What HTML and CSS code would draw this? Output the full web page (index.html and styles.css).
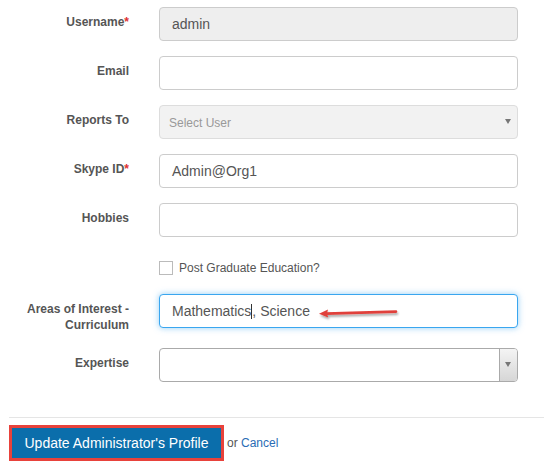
FILE: index.html
```
<!DOCTYPE html>
<html>
<head>
<meta charset="utf-8">
<link rel="stylesheet" href="styles.css">
</head>
<body>
<form class="form">
  <div class="row">
    <label class="lbl">Username<span class="req">*</span></label>
    <div class="field"><div class="input disabled">admin</div></div>
  </div>
  <div class="row">
    <label class="lbl">Email</label>
    <div class="field"><div class="input"></div></div>
  </div>
  <div class="row">
    <label class="lbl">Reports To</label>
    <div class="field"><div class="input select-dis"><span class="placeholder">Select User</span><span class="caret"></span></div></div>
  </div>
  <div class="row">
    <label class="lbl">Skype ID<span class="req">*</span></label>
    <div class="field"><div class="input">Admin@Org1</div></div>
  </div>
  <div class="row">
    <label class="lbl">Hobbies</label>
    <div class="field"><div class="input"></div></div>
  </div>
  <div class="row check-row">
    <div></div>
    <label class="check"><span class="box"></span>Post Graduate Education?</label>
  </div>
  <div class="row">
    <label class="lbl">Areas of Interest -<br>Curriculum</label>
    <div class="field"><div class="input focus">Mathematics<span class="cursor"></span>, Science</div></div>
  </div>
  <div class="row">
    <label class="lbl">Expertise</label>
    <div class="field"><div class="input combo"><span class="combo-btn"><span class="caret"></span></span></div></div>
  </div>
  <div class="footer">
    <button type="button" class="btn">Update Administrator's Profile</button>
    <span class="or">or <a class="cancel">Cancel</a></span>
  </div>
  <svg class="arrow" width="90" height="16" viewBox="0 0 90 16">
    <defs>
      <filter id="sh" x="-10%" y="-50%" width="120%" height="200%">
        <feGaussianBlur in="SourceAlpha" stdDeviation="1.2"/>
        <feOffset dx="1" dy="2"/>
        <feComponentTransfer><feFuncA type="linear" slope="0.35"/></feComponentTransfer>
        <feMerge><feMergeNode/><feMergeNode in="SourceGraphic"/></feMerge>
      </filter>
    </defs>
    <g filter="url(#sh)">
      <path d="M10 8.6 L80 6.6" stroke="#e0403a" stroke-width="2.6" stroke-linecap="round" fill="none"/>
      <path d="M3 8.8 L12 4.6 L11 8.6 L12.2 12.6 Z" fill="#e0403a"/>
    </g>
  </svg>
</form>
</body>
</html>
```
FILE: styles.css
```
* { box-sizing: border-box; }
body {
  margin: 0;
  font-family: "Liberation Sans", Arial, sans-serif;
  background: #fff;
  color: #555;
  width: 544px;
  height: 468px;
  overflow: hidden;
}
.form {
  position: relative;
  padding-top: 7px;
}
.row {
  display: grid;
  grid-template-columns: 129px 359px;
  column-gap: 30px;
  margin-bottom: 15px;
}
.lbl {
  text-align: right;
  font-size: 12px;
  font-weight: bold;
  line-height: 16px;
  padding-top: 7px;
  color: #555;
}
.req { color: #e0302f; }
.input {
  height: 34px;
  border: 1px solid #ccc;
  border-radius: 4px;
  padding: 0 12px;
  font-size: 14px;
  line-height: 32px;
  color: #555;
  background: #fff;
  position: relative;
}
.disabled { background: #eee; }
.select-dis {
  background: #f2f2f2;
  border-color: #ddd;
}
.placeholder { font-size: 12px; color: #999; margin-left: -3px; }
.caret {
  position: absolute;
  width: 0; height: 0;
  border-left: 3.5px solid transparent;
  border-right: 3.5px solid transparent;
  border-top: 5px solid #777;
}
.select-dis .caret { right: 6px; top: 13px; }
.check-row { margin-bottom: 18px; padding-top: 8px; }
.check {
  display: flex;
  align-items: center;
  font-size: 12px;
  color: #555;
  line-height: 16px;
}
.box {
  width: 14px; height: 14px;
  border: 1px solid #bbb;
  background: #fff;
  margin-right: 6px;
}
.focus {
  border-color: #3aa6ef;
  box-shadow: 0 0 6px rgba(58, 166, 239, 0.55);
}
.cursor {
  display: inline-block;
  width: 1px;
  height: 15px;
  background: #333;
  vertical-align: -3px;
}
.combo { border-color: #aaa; }
.combo-btn {
  position: absolute;
  right: 0; top: 0; bottom: 0;
  width: 18px;
  border-left: 1px solid #aaa;
  border-radius: 0 3px 3px 0;
  background: linear-gradient(#f4f4f4, #d6d6d6);
}
.combo-btn .caret { left: 5px; top: 13px; }
.footer {
  margin-left: 9px;
  margin-top: 35px;
  border-top: 1px solid #e5e5e5;
  padding-top: 10px;
  display: flex;
  align-items: center;
}
.btn {
  font-family: "Liberation Sans", Arial, sans-serif;
  font-size: 14px;
  color: #fff;
  background: #0b6eab;
  border: none;
  height: 30px;
  width: 209px;
  padding: 0;
  outline: 3px solid #e8423b;
  margin-left: 3px;
}
.or {
  font-size: 12px;
  color: #555;
  margin-left: 6px;
}
.cancel { color: #2a6db5; }
.arrow {
  position: absolute;
  left: 316px;
  top: 305px;
}
```
